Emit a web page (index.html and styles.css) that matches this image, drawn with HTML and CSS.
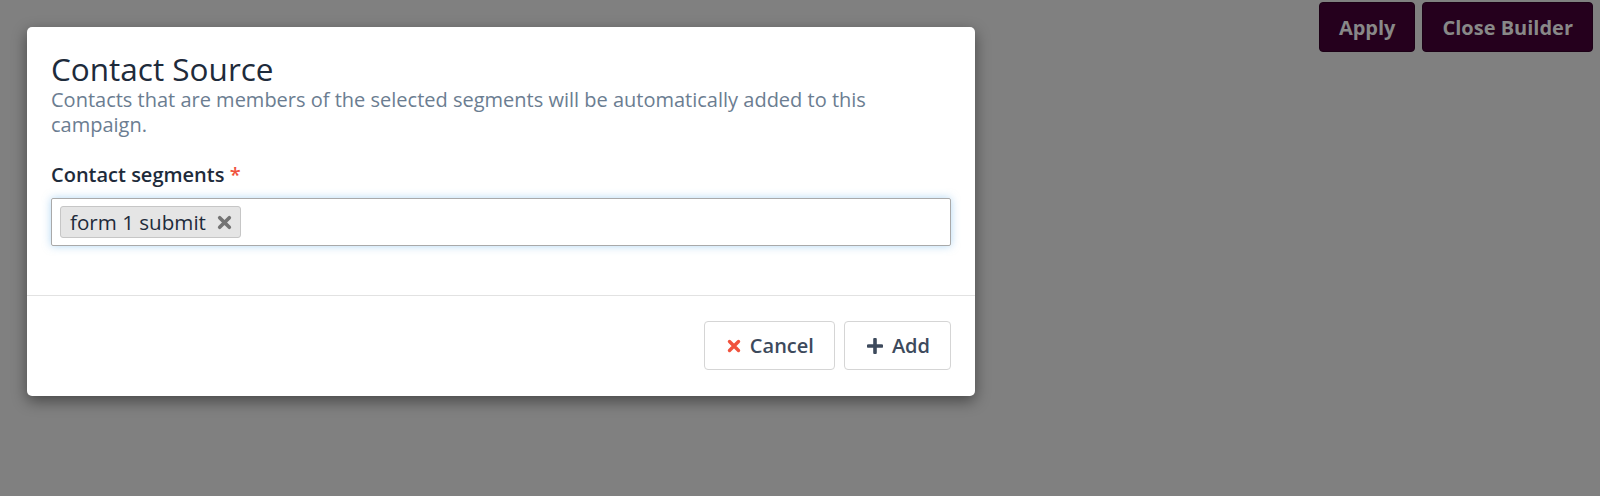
FILE: index.html
```html
<!DOCTYPE html>
<html>
<head>
<meta charset="utf-8">
<link rel="stylesheet" href="styles.css">
</head>
<body>
<div class="page">
  <div class="toolbar">
    <button class="tbtn">Apply</button>
    <button class="tbtn">Close Builder</button>
  </div>
  <div class="modal">
    <div class="modal-body">
      <h1 class="title">Contact Source</h1>
      <p class="subtitle">Contacts that are members of the selected segments will be automatically added to this campaign.</p>
      <label class="label">Contact segments <span class="req">*</span></label>
      <div class="input">
        <span class="tag">form 1 submit
          <svg class="tag-x" width="15" height="15" viewBox="0 0 14 14"><path d="M2.5 2.5L11.5 11.5M11.5 2.5L2.5 11.5" stroke="#747474" stroke-width="3.4" stroke-linecap="round"/></svg>
        </span>
      </div>
    </div>
    <div class="modal-footer">
      <button class="btn"><svg width="14" height="14" viewBox="0 0 14 14"><path d="M2.5 2.5L11.5 11.5M11.5 2.5L2.5 11.5" stroke="#f0533e" stroke-width="3.4" stroke-linecap="round"/></svg>Cancel</button>
      <button class="btn"><svg width="16" height="16" viewBox="0 0 16 16"><path d="M8 1.5V14.5M1.5 8H14.5" stroke="#3d4a5c" stroke-width="3.6" stroke-linecap="round"/></svg>Add</button>
    </div>
  </div>
</div>
</body>
</html>
```

FILE: styles.css
```css
html, body {
  margin: 0;
  padding: 0;
  background: #808080;
  font-family: "Open Sans", "Noto Sans", sans-serif;
}
.page {
  position: relative;
  width: 1600px;
  height: 496px;
}
.toolbar {
  position: absolute;
  top: 2px;
  right: 7px;
  display: flex;
  gap: 7px;
}
.tbtn {
  background: #25001d;
  color: #888888;
  border: 1px solid #1c0016;
  border-radius: 4px;
  font-family: "Open Sans", sans-serif;
  font-weight: 700;
  font-size: 20px;
  height: 50px;
  padding: 0 19px;
}
.modal {
  position: absolute;
  left: 27px;
  top: 27px;
  width: 948px;
  height: 369px;
  background: #fff;
  border-radius: 5px;
  box-shadow: 0 5px 15px rgba(0,0,0,0.45);
  display: flex;
  flex-direction: column;
}
.modal-body {
  padding: 25px 24px 0 24px;
  height: 269px;
  border-bottom: 1px solid #e2e2e2;
  box-sizing: border-box;
}
.title {
  margin: 0;
  font-weight: 400;
  font-size: 31.5px;
  line-height: 34px;
  color: #1e2b3b;
}
.subtitle {
  margin: 1px 0 25px 0;
  font-size: 20px;
  line-height: 25px;
  color: #6b7d91;
  max-width: 880px;
}
.label {
  display: block;
  font-weight: 600;
  font-size: 20px;
  line-height: 25px;
  color: #1e2b3b;
  margin-bottom: 11px;
}
.req { color: #f0533e; }
.input {
  height: 48px;
  box-sizing: border-box;
  border: 1px solid #a9a9a9;
  border-radius: 2px;
  box-shadow: 0 0 8px rgba(102,175,233,0.5);
  padding: 0 8px;
  display: flex;
  align-items: center;
}
.tag {
  display: inline-flex;
  align-items: center;
  gap: 11px;
  height: 32px;
  box-sizing: border-box;
  padding: 0 8px 0 9px;
  background: #e5e5e5;
  border: 1px solid #c6c6c6;
  border-radius: 3px;
  font-size: 20.6px;
  color: #1e2b3b;
}
.modal-footer {
  display: flex;
  justify-content: flex-end;
  gap: 9px;
  padding: 25px 24px 0 0;
}
.btn {
  height: 49px;
  display: inline-flex;
  align-items: center;
  gap: 9px;
  background: #fff;
  border: 1px solid #d5d5d5;
  border-radius: 4px;
  font-family: "Open Sans", sans-serif;
  font-size: 20px;
  font-weight: 600;
  color: #3d4a5c;
  padding: 0 20px 0 22px;
}
```
